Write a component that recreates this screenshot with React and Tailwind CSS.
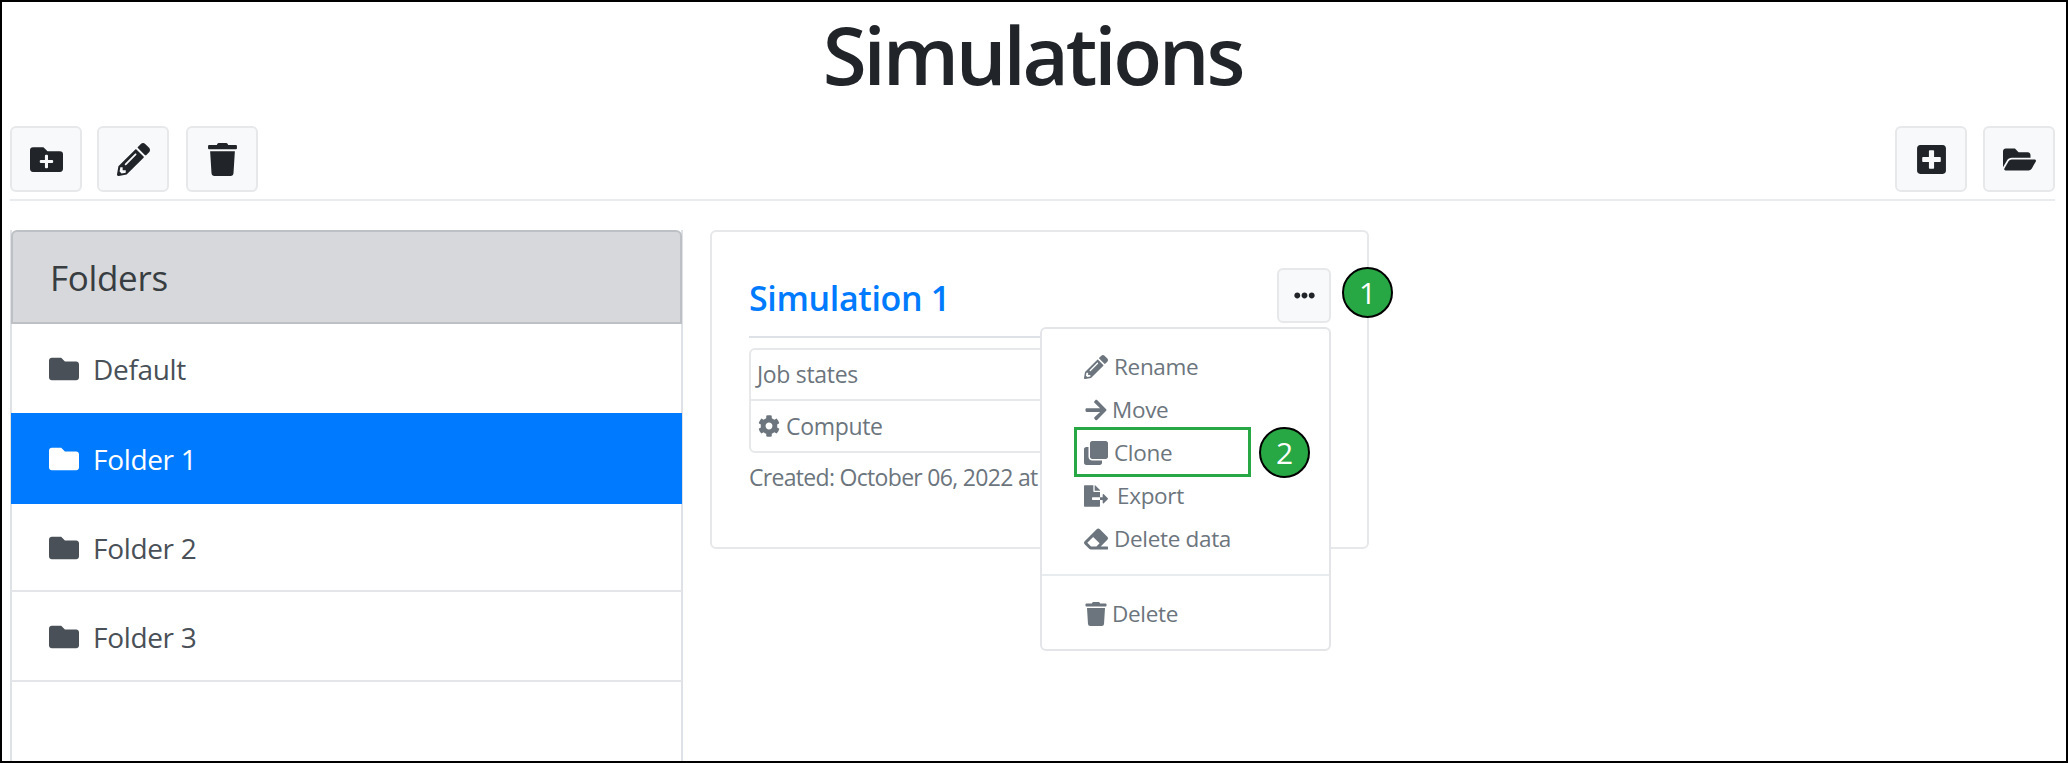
import { FaFolderPlus, FaPencilAlt, FaTrash, FaPlusSquare, FaFolderOpen, FaEllipsisH, FaFolder, FaCog, FaArrowRight, FaClone, FaFileExport, FaEraser } from 'react-icons/fa';

const folders = [
  { name: 'Default', row: 'h-[89px] pt-[1px]' },
  { name: 'Folder 1', row: 'h-[91px] bg-[#007bff] text-white', active: true },
  { name: 'Folder 2', row: 'h-[88px] pt-[1px] border-b-2 border-[#e3e5e8]' },
  { name: 'Folder 3', row: 'h-[90px] pt-[1px] border-b-2 border-[#e3e5e8]' },
];

const menuItems = [
  { label: 'Rename', icon: FaPencilAlt, gap: 'gap-[6px]' },
  { label: 'Move', icon: FaArrowRight, gap: 'gap-[4px]' },
  { label: 'Clone', icon: FaClone, gap: 'gap-[6px]' },
  { label: 'Export', icon: FaFileExport, gap: 'gap-[9px]' },
  { label: 'Delete data', icon: FaEraser, gap: 'gap-[6px]' },
];

function ToolButton({ icon: Icon }) {
  return (
    <button className="w-[72px] h-[66px] flex items-center justify-center bg-[#f8f9fa] border-2 border-[#e6e8ea] rounded-md text-[#212529] text-[33px]">
      <Icon />
    </button>
  );
}

function Badge({ children, className }) {
  return (
    <div className={`absolute w-[51px] h-[51px] rounded-full bg-[#28a745] border-2 border-black text-white text-[30px] leading-none flex items-center justify-center ${className}`}>
      {children}
    </div>
  );
}

export default function App() {
  return (
    <div className="h-[763px] border-2 border-black bg-white overflow-hidden flex flex-col pl-2 pr-[11px] tracking-[-0.02em] font-['Open_Sans',sans-serif] text-[#495057]">
      {/* Title */}
      <h1 className="h-[124px] pb-[20px] flex items-center justify-center text-[80px] leading-none font-semibold text-[#212529] tracking-[-0.04em]">
        Simulations
      </h1>

      {/* Toolbar */}
      <div className="flex justify-between h-[75px] border-b-2 border-[#e9ecef]">
        <div className="flex items-start">
          <ToolButton icon={FaFolderPlus} />
          <div className="w-[15px]" />
          <ToolButton icon={FaPencilAlt} />
          <div className="w-[17px]" />
          <ToolButton icon={FaTrash} />
        </div>
        <div className="flex gap-4 items-start">
          <ToolButton icon={FaPlusSquare} />
          <ToolButton icon={FaFolderOpen} />
        </div>
      </div>

      <div className="flex flex-1 pt-[29px] gap-[27px] min-h-0">
        {/* Folders panel */}
        <div className="w-[673px] shrink-0 border-x-2 border-[#dee2e6] flex flex-col mb-[-4px]">
          <div className="h-[94px] pt-[3px] -mx-[1px] pl-[37px] flex items-center bg-[#d6d8db] border-2 border-[#bdc0c4] rounded-t-md text-[35px] font-medium text-[#383d41]">
            Folders
          </div>
          {folders.map(({ name, row, active }) => (
            <div key={name} className={`-mx-[1px] pl-[38px] flex items-center gap-[14px] text-[28px] ${row}`}>
              <FaFolder className={`text-[30px] ${active ? 'text-white' : 'text-[#495057]'}`} />
              {name}
            </div>
          ))}
        </div>

        {/* Simulation card */}
        <div className="relative w-[659px] h-[319px] shrink-0 border-2 border-[#e6e8ea] rounded-md pl-[37px] pr-[36px] pt-[30px] self-start">
          <div className="flex justify-between items-start h-[76px] border-b-2 border-[#dee2e6]">
            <a className="mt-[14px] text-[34px] leading-[44px] font-semibold tracking-[-0.01em] text-[#007bff]">Simulation 1</a>
            <button className="w-[54px] h-[55px] mt-[6px] flex items-center justify-center bg-[#f8f9fa] border-2 border-[#e6e8ea] rounded-md text-[#212529] text-[21px]">
              <FaEllipsisH />
            </button>
          </div>
          <div className="mt-[10px] h-[105px] border-2 border-[#e6e8ea] rounded-md text-[23px] text-[#6c757d]">
            <div className="h-[51px] pl-[6px] flex items-center border-b-2 border-[#e6e8ea]">Job states</div>
            <div className="h-[50px] pl-[7px] flex items-center gap-[6px]"><FaCog className="text-[22px]" />Compute</div>
          </div>
          <p className="mt-[8px] text-[23px] leading-[32px] tracking-[-0.03em] text-[#6c757d] whitespace-nowrap">Created: October 06, 2022 at 10:14</p>

          {/* Dropdown menu */}
          <div className="absolute left-[328px] top-[95px] w-[291px] h-[324px] bg-white border-2 border-[#e3e5e8] rounded-md pt-[16px] pl-[42px] text-[22.5px] text-[#6c757d]">
            {menuItems.map(({ label, icon: Icon, gap }) => (
              <div key={label} className={`h-[43px] flex items-center ${gap}`}>
                <Icon className="text-[24px] shrink-0" />
                {label}
              </div>
            ))}
            <div className="-ml-[42px] mt-[14px] border-t-2 border-[#e9ecef]" />
            <div className="mt-[16px] h-[43px] flex items-center gap-[4px]">
              <FaTrash className="text-[24px]" />
              Delete
            </div>
          </div>

          {/* Callouts */}
          <div className="absolute left-[362px] top-[195px] w-[177px] h-[50px] border-[3px] border-[#28a745]" />
          <Badge className="left-[630px] top-[35px]">1</Badge>
          <Badge className="left-[547px] top-[195px]">2</Badge>
        </div>
      </div>
    </div>
  );
}
